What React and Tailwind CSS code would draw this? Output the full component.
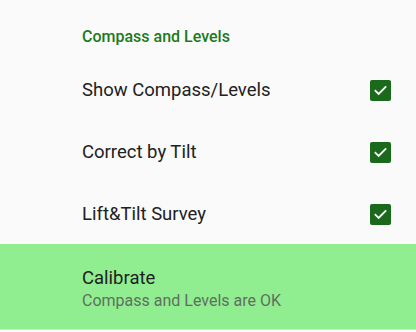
import React from "react";

function Check() {
  return (
    <div className="w-[21px] h-[21px] rounded-[2px] bg-[#1b6a1b] flex items-center justify-center">
      <svg width="15" height="15" viewBox="0 0 24 24" fill="none">
        <path d="M4 12.5l5 5L20 6.5" stroke="white" strokeWidth="3" strokeLinecap="square" />
      </svg>
    </div>
  );
}

function Row({ label }) {
  return (
    <div className="h-[62px] pt-[3px] flex items-center pl-[82px] pr-[25px]">
      <div className="flex-1 text-[18.5px] text-[#212121]">{label}</div>
      <Check />
    </div>
  );
}

export default function App() {
  return (
    <div className="w-[416px] h-[332px] bg-[#fafafa] overflow-hidden" style={{ fontFamily: "Roboto, sans-serif" }}>
      <div className="h-[58px] pl-[82px] pt-[26px] text-[16px] leading-[22px] font-medium text-[#1b7a1b]">Compass and Levels</div>
      <Row label="Show Compass/Levels" />
      <Row label="Correct by Tilt" />
      <Row label="Lift&Tilt Survey" />
      <div className="h-[85px] pt-[4px] bg-[#90ee90] pl-[82px] flex flex-col justify-center">
        <div className="text-[18.5px] leading-[24px] text-[#212121]">Calibrate</div>
        <div className="text-[16px] leading-[22px] text-[#5f6f5f]">Compass and Levels are OK</div>
      </div>
      <div className="h-[1px] bg-[#dcdcdc]" />
    </div>
  );
}
